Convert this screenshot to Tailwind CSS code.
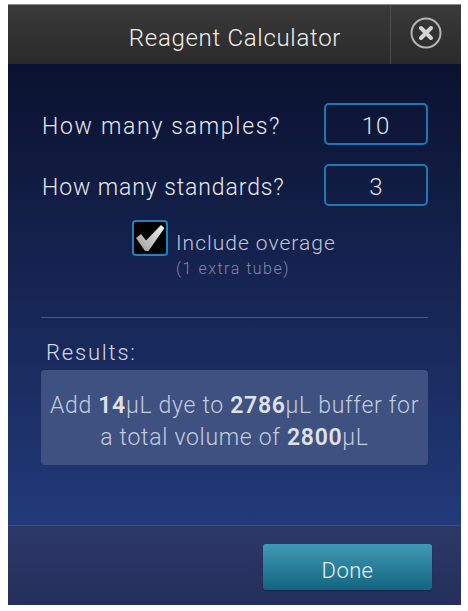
<!doctype html>
<html>
<head>
<meta charset="utf-8">
<script src="https://cdn.jsdelivr.net/npm/@tailwindcss/browser@4"></script>
</head>
<body class="w-[468px] h-[611px] bg-white overflow-hidden font-['Roboto',sans-serif]">
<div class="ml-2 mt-1 w-[453px] h-[601px] flex flex-col border-t border-[#888]">
  <header class="h-[59px] shrink-0 flex bg-gradient-to-b from-[#3a3a3a] to-[#2b2a2a]">
    <div class="flex-1 flex items-center justify-center pl-[72px] pt-[6px] text-[24px] font-light tracking-[0.7px] text-[#f0f0ee]">Reagent Calculator</div>
    <div class="w-[71px] border-l border-[#4c4c4c] flex items-start justify-center pt-[12px] pr-[1px]">
      <svg width="32" height="32" viewBox="0 0 32 32" fill="none"><circle cx="16" cy="16" r="14.500" stroke="#b5b5b5" stroke-width="2"/><path d="M11 11l10 10M21 11L11 21" stroke="#d4d4d4" stroke-width="4" stroke-linecap="round"/></svg>
    </div>
  </header>
  <main class="flex-1 bg-gradient-to-b from-[#0b1230] to-[#213a7a] px-[33px] pt-[39px] flex flex-col">
    <div class="flex items-center justify-between h-[42px]">
      <span class="pt-[6px] pl-px text-[23px] font-light tracking-[1.7px] text-[#e6e8ee]">How many samples?</span>
      <div class="w-[104px] h-[42px] border-2 border-[#1d78b4] rounded-[5px] flex items-center justify-center pt-[3px] text-[24px] font-light text-[#dfe2ea] tracking-[1px]">10</div>
    </div>
    <div class="flex items-center justify-between h-[42px] mt-[19px]">
      <span class="pt-[6px] pl-px text-[23px] font-light tracking-[0.9px] text-[#e6e8ee]">How many standards?</span>
      <div class="w-[104px] h-[42px] border-2 border-[#1d78b4] rounded-[5px] flex items-center justify-center pt-[3px] text-[24px] font-light text-[#dfe2ea]">3</div>
    </div>
    <div class="flex items-start mt-[14px] ml-[91px] gap-[8px]">
      <div class="w-[36px] h-[36px] bg-black border-2 border-[#2180c0] rounded-[4px] flex items-center justify-center shrink-0">
        <svg width="32" height="32" viewBox="2 2 32 32"><defs><linearGradient id="c" x1="0" y1="1" x2="1" y2="0"><stop offset="0" stop-color="#9a9a98"/><stop offset="1" stop-color="#f2f2f0"/></linearGradient></defs><path d="M4 18L9 14L14 20.500L29 5L32.500 8L16.500 31L13 31Z" fill="url(#c)"/></svg>
      </div>
      <div class="flex flex-col">
        <span class="text-[21px] leading-[26px] mt-[10px] font-light tracking-[1px] text-[#c0c6d6]">Include overage</span>
        <span class="text-[16px] leading-[20px] mt-[3px] font-light tracking-[1.5px] text-[#7f8aa6]">(1 extra tube)</span>
      </div>
    </div>
    <div class="h-px bg-[#45578a] mt-[38px]"></div>
    <div class="text-[22px] leading-[26px] font-light tracking-[1.8px] text-[#d3d8e4] mt-[22px] ml-[5px]">Results:</div>
    <div class="mt-[4px] h-[95px] bg-[#3f5180] rounded-[4px] flex items-center justify-center text-center text-[23px] pt-[8px] leading-[32px] font-light tracking-[0.7px] text-[#c3ccde]">
      <p>Add <b class="font-semibold text-[#dde1e8]">14</b>µL dye to <b class="font-semibold text-[#dde1e8]">2786</b>µL buffer for<br>a total volume of <b class="font-semibold text-[#dde1e8]">2800</b>µL</p>
    </div>
  </main>
  <footer class="h-[80px] shrink-0 border-t border-[#3d4e80] bg-gradient-to-b from-[#2c3866] to-[#252f5c] flex items-start justify-end pt-[18px] pr-[29px]">
    <div class="w-[169px] h-[46px] rounded-[3px] bg-gradient-to-b from-[#3f9ab5] to-[#12657f] flex items-center justify-center pt-[7px] text-[22px] font-light tracking-[0.4px] text-[#e8f2f5] shadow-[0_1px_1px_#16204a]">Done</div>
  </footer>
</div>
</body>
</html>
